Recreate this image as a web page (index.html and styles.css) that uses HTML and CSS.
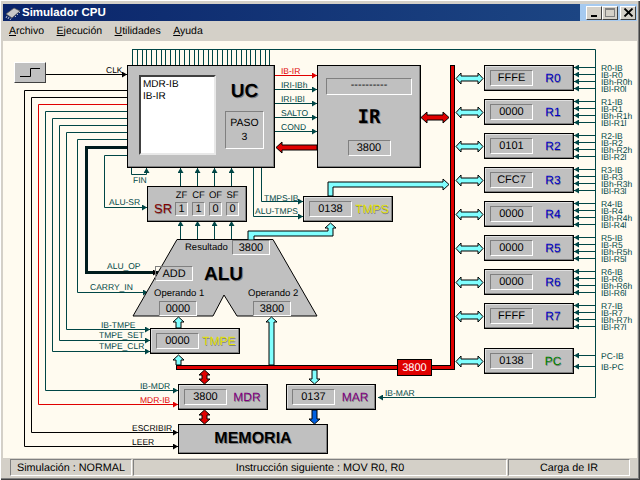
FILE: index.html
```html
<!DOCTYPE html>
<html lang="es">
<head>
    <meta charset="UTF-8">
    <title>Simulador CPU</title>
    <link rel="stylesheet" href="styles.css">
</head>
<body>
<div class="window">
    <div class="titlebar">
        <svg class="chip" width="16" height="14" viewBox="0 0 16 14">
            <path d="M1 8 L9 2 L15 5 L7 12 Z" fill="#c8c8c8" stroke="#505050" stroke-width="0.7"/>
            <path d="M2 10 L1 12 M4 11 L3 13 M6 12.500 L5 14 M10 10 L11 11 M12 8 L13 9 M14 6 L15 7" stroke="#e8e8e8" stroke-width="0.8"/>
        </svg>
        <span class="caption">Simulador CPU</span>
        <div class="winbtns">
            <button class="winbtn"><span class="ico-min"></span></button>
            <button class="winbtn winbtn-max"><span class="ico-max"></span></button>
            <button class="winbtn winbtn-close">
                <svg width="11" height="9" viewBox="0 0 11 9"><path d="M1.500 0.500 L9.500 8.500 M9.500 0.500 L1.500 8.500" stroke="#000" stroke-width="1.800"/></svg>
            </button>
        </div>
    </div>

    <div class="menubar">
        <span><u>A</u>rchivo</span>
        <span><u>E</u>jecución</span>
        <span><u>U</u>tilidades</span>
        <span><u>A</u>yuda</span>
    </div>

    <div class="diagram">
        <!-- wires use screen coordinates, hence the viewBox offset -->
        <svg class="wires" width="634" height="417" viewBox="3 41 634 417">
            <defs>
                <marker id="hTeal" markerUnits="userSpaceOnUse" markerWidth="5" markerHeight="6" refX="5" refY="3" orient="auto"><path d="M0 0L5 3L0 6z" fill="#004646"/></marker>
                <marker id="hBlack" markerUnits="userSpaceOnUse" markerWidth="5" markerHeight="6" refX="5" refY="3" orient="auto"><path d="M0 0L5 3L0 6z" fill="#000"/></marker>
                <marker id="hRed" markerUnits="userSpaceOnUse" markerWidth="5" markerHeight="6" refX="5" refY="3" orient="auto"><path d="M0 0L5 3L0 6z" fill="#e00000"/></marker>
                <polygon id="dbl" points="456,0 461,-5.500 461,-2.500 478,-2.500 478,-5.500 483,0 478,5.500 478,2.500 461,2.500 461,5.500"/>
                <polygon id="dblV" points="0,0 5.500,5 2.500,5 2.500,9 5.500,9 0,14 -5.500,9 -2.500,9 -2.500,5 -5.500,5"/>
            </defs>

            <!-- comb above the control unit -->
            <path class="wire" d="M132.500 49V65M137.500 49V65M142.500 49V65M146.500 49V65M151.500 49V65M156.500 49V65M161.500 49V65M165.500 49V65M170.500 49V65M175.500 49V65M179.500 49V65M184.500 49V65M189.500 49V65M194.500 49V65M198.500 49V65M203.500 49V65M208.500 49V65M212.500 49V65M217.500 49V65M222.500 49V65M227.500 49V65M231.500 49V65M236.500 49V65M241.500 49V65M246.500 49V65M250.500 49V65M255.500 49V65M260.500 49V65M265.500 49V65M269.500 49V65"/>

            <g class="wire" marker-end="url(#hTeal)">
                <path d="M132 49.500H595.500V397.500H378"/>
                <path d="M275 89.500H317"/>
                <path d="M275 103.500H317"/>
                <path d="M275 117.500H317"/>
                <path d="M275 131.500H317"/>
                <path d="M127 111.500H45.500V390.500H178"/>
                <path d="M127 118.500H52.500V351.500H150"/>
                <path d="M127 125.500H59.500V340.500H150"/>
                <path d="M127 132.500H66.500V329.500H150"/>
                <path d="M127 139.500H77.500V292.500H148"/>
                <path d="M127 155.500H104.500V207.500H147"/>
                <path d="M131.500 168V174.500H146.500V168"/>
                <path d="M261.500 168V201.500H303"/>
                <path d="M253.500 168V216.500H303"/>
                <path d="M180.500 186V168"/>
                <path d="M197.500 186V168"/>
                <path d="M214.500 186V168"/>
                <path d="M231.500 186V168"/>
                <path d="M180.500 240V221"/>
                <path d="M197.500 240V221"/>
                <path d="M214.500 240V221"/>
                <path d="M231.500 240V221"/>

                <path d="M595 67.500H574"/><path d="M595 74.500H574"/><path d="M595 81.500H574"/><path d="M595 88.500H574"/>
                <path d="M595 101.500H574"/><path d="M595 108.500H574"/><path d="M595 115.500H574"/><path d="M595 122.500H574"/>
                <path d="M595 135.500H574"/><path d="M595 142.500H574"/><path d="M595 149.500H574"/><path d="M595 156.500H574"/>
                <path d="M595 169.500H574"/><path d="M595 176.500H574"/><path d="M595 183.500H574"/><path d="M595 190.500H574"/>
                <path d="M595 203.500H574"/><path d="M595 210.500H574"/><path d="M595 217.500H574"/><path d="M595 224.500H574"/>
                <path d="M595 237.500H574"/><path d="M595 244.500H574"/><path d="M595 251.500H574"/><path d="M595 258.500H574"/>
                <path d="M595 271.500H574"/><path d="M595 278.500H574"/><path d="M595 285.500H574"/><path d="M595 292.500H574"/>
                <path d="M595 305.500H574"/><path d="M595 312.500H574"/><path d="M595 319.500H574"/><path d="M595 326.500H574"/>
                <path d="M595 355.500H574"/><path d="M595 366.500H574"/>
            </g>
            <g class="wire-black" marker-end="url(#hBlack)">
                <path d="M46 74.500H127"/>
                <path d="M127 90.500H24.500V446.500H178"/>
                <path d="M127 97.500H31.500V432.500H178"/>
                <path class="wire-thick" d="M127 147.500H86.500V272.500H158"/>
            </g>
            <g class="wire-red" marker-end="url(#hRed)">
                <path d="M275 75.500H317"/>
                <path d="M127 104.500H38.500V404.500H178"/>
            </g>

            <!-- internal bus -->
            <path class="bus-edge" d="M452.500 65V367.500H176"/>
            <path class="bus-core" d="M452.500 66V367.500H177"/>

            <!-- ALU body -->
            <polygon class="alu-shape" points="177,239.500 273,239.500 317,316 237,316 224,295 213,316 133,316"/>

            <!-- fat arrows -->
            <g class="fat-cyan">
                <use href="#dbl" y="78.500"/>
                <use href="#dbl" y="112.500"/>
                <use href="#dbl" y="146.500"/>
                <use href="#dbl" y="180.500"/>
                <use href="#dbl" y="214.500"/>
                <use href="#dbl" y="248.500"/>
                <use href="#dbl" y="282.500"/>
                <use href="#dbl" y="316.500"/>
                <use href="#dbl" y="361.500"/>
                <polygon points="328,196 328,182 443,182 443,179 449,184.500 443,190 443,187 333,187 333,196"/>
                <polygon points="330.500,223 336,228 333,228 333,236 254,236 254,240 248,240 248,231 328,231 328,228 325,228"/>
                <polygon points="178.500,317 184,322 181,322 181,328 176,328 176,322 173,322"/>
                <polygon points="178.500,355 184,360 181,360 181,365 176,365 176,360 173,360"/>
                <polygon points="271.500,317 277,322 274,322 274,365 269,365 269,322 266,322"/>
                <polygon points="314.500,384 320,379 317,379 317,370 312,370 312,379 309,379"/>
            </g>
            <g class="fat-red">
                <polygon points="421,117.500 427,112 427,115 443,115 443,112 449,117.500 443,123 443,120 427,120 427,123"/>
                <polygon points="276,147.500 282,142 282,145 317,145 317,150 282,150 282,153"/>
                <use href="#dblV" x="204.500" y="370"/>
                <use href="#dblV" x="204.500" y="410"/>
            </g>
            <polygon class="fat-blue" points="314.500,424 320,419 317,419 317,410 312,410 312,419 309,419"/>

            <!-- signal names -->
            <g class="sig">
                <text class="sig-black" x="106" y="73">CLK</text>
                <text class="sig-red" x="281" y="74">IB-IR</text>
                <text x="281" y="88">IRI-IBh</text>
                <text x="281" y="102">IRI-IBl</text>
                <text x="281" y="116">SALTO</text>
                <text x="281" y="130">COND</text>
                <text x="133" y="183">FIN</text>
                <text x="264" y="201">TMPS-IB</text>
                <text x="255" y="214">ALU-TMPS</text>
                <text x="109" y="205">ALU-SR</text>
                <text x="107" y="269">ALU_OP</text>
                <text x="90" y="290">CARRY_IN</text>
                <text x="101" y="328">IB-TMPE</text>
                <text x="99" y="338">TMPE_SET</text>
                <text x="99" y="349">TMPE_CLR</text>
                <text x="140" y="389">IB-MDR</text>
                <text class="sig-red" x="140" y="403">MDR-IB</text>
                <text class="sig-black" x="132" y="431">ESCRIBIR</text>
                <text class="sig-black" x="132" y="445">LEER</text>
                <text x="385" y="396">IB-MAR</text>

                <text x="601" y="70.500">R0-IB</text><text x="601" y="77.500">IB-R0</text><text x="601" y="84.500">IBh-R0h</text><text x="601" y="91.500">IBl-R0l</text>
                <text x="601" y="104.500">R1-IB</text><text x="601" y="111.500">IB-R1</text><text x="601" y="118.500">IBh-R1h</text><text x="601" y="125.500">IBl-R1l</text>
                <text x="601" y="138.500">R2-IB</text><text x="601" y="145.500">IB-R2</text><text x="601" y="152.500">IBh-R2h</text><text x="601" y="159.500">IBl-R2l</text>
                <text x="601" y="172.500">R3-IB</text><text x="601" y="179.500">IB-R3</text><text x="601" y="186.500">IBh-R3h</text><text x="601" y="193.500">IBl-R3l</text>
                <text x="601" y="206.500">R4-IB</text><text x="601" y="213.500">IB-R4</text><text x="601" y="220.500">IBh-R4h</text><text x="601" y="227.500">IBl-R4l</text>
                <text x="601" y="240.500">R5-IB</text><text x="601" y="247.500">IB-R5</text><text x="601" y="254.500">IBh-R5h</text><text x="601" y="261.500">IBl-R5l</text>
                <text x="601" y="274.500">R6-IB</text><text x="601" y="281.500">IB-R6</text><text x="601" y="288.500">IBh-R6h</text><text x="601" y="295.500">IBl-R6l</text>
                <text x="601" y="308.500">R7-IB</text><text x="601" y="315.500">IB-R7</text><text x="601" y="322.500">IBh-R7h</text><text x="601" y="329.500">IBl-R7l</text>
                <text x="601" y="358.500">PC-IB</text><text x="601" y="369.500">IB-PC</text>
            </g>
        </svg>

        <button class="clock">
            <svg width="24" height="15" viewBox="0 0 24 15"><path d="M2 11.500H12.500V3.500H22" fill="none" stroke="#000"/></svg>
        </button>

        <div class="uc">
            <div class="uc-list">MDR-IB<br>IB-IR</div>
            <div class="uc-side">
                <div class="big uc-name">UC</div>
                <div class="paso">PASO<br>3</div>
            </div>
        </div>

        <div class="ir">
            <div class="field ir-code">----------</div>
            <div class="big ir-name">IR</div>
            <div class="field">3800</div>
        </div>

        <div class="sr">
            <span class="name name-sr">SR</span>
            <div class="flags">
                <span>ZF</span><span>CF</span><span>OF</span><span>SF</span>
                <div class="field flag">1</div><div class="field flag">1</div><div class="field flag">0</div><div class="field flag">0</div>
            </div>
        </div>

        <div class="alu">
            <span class="alu-text alu-res">Resultado</span>
            <div class="field alu-f alu-f-res">3800</div>
            <div class="field alu-f alu-f-op">ADD</div>
            <div class="big alu-name">ALU</div>
            <span class="alu-text alu-op1">Operando 1</span>
            <div class="field alu-f alu-f-1">0000</div>
            <span class="alu-text alu-op2">Operando 2</span>
            <div class="field alu-f alu-f-2">3800</div>
        </div>

        <div class="reg reg-tmps"><div class="field">0138</div><span class="name name-tmp">TMPS</span></div>
        <div class="reg reg-tmpe"><div class="field">0000</div><span class="name name-tmp">TMPE</span></div>
        <div class="reg reg-mdr"><div class="field">3800</div><span class="name name-mem">MDR</span></div>
        <div class="reg reg-mar"><div class="field">0137</div><span class="name name-mem">MAR</span></div>

        <div class="big memoria">MEMORIA</div>
        <div class="bus-value">3800</div>

        <div class="reg-col">
            <div class="reg"><div class="field">FFFE</div><span class="name name-gp">R0</span></div>
            <div class="reg"><div class="field">0000</div><span class="name name-gp">R1</span></div>
            <div class="reg"><div class="field">0101</div><span class="name name-gp">R2</span></div>
            <div class="reg"><div class="field">CFC7</div><span class="name name-gp">R3</span></div>
            <div class="reg"><div class="field">0000</div><span class="name name-gp">R4</span></div>
            <div class="reg"><div class="field">0000</div><span class="name name-gp">R5</span></div>
            <div class="reg"><div class="field">0000</div><span class="name name-gp">R6</span></div>
            <div class="reg"><div class="field">FFFF</div><span class="name name-gp">R7</span></div>
        </div>
        <div class="reg reg-pc"><div class="field">0138</div><span class="name name-pc">PC</span></div>
    </div>

    <div class="statusbar">
        <div class="panel">Simulación : NORMAL</div>
        <div class="panel">Instrucción siguiente : MOV R0, R0</div>
        <div class="panel">Carga de IR</div>
    </div>
</div>
</body>
</html>
```

FILE: styles.css
```css
* {
    box-sizing: border-box;
}
body {
    margin: 0;
    background: #d4d0c8;
    font-family: "Liberation Sans", Arial, sans-serif;
    text-rendering: geometricPrecision;
}
.window {
    width: 640px;
    height: 480px;
    display: flex;
    flex-direction: column;
    padding: 4px 3px 3px;
    background: #d4d0c8;
    box-shadow: inset 1px 1px #fff, inset -1px -1px #404040, inset -2px -2px #808080;
    overflow: hidden;
}

/* title bar */
.titlebar {
    height: 17px;
    flex: none;
    display: flex;
    align-items: center;
    padding-left: 2px;
    background: linear-gradient(to right, #0a246a 0, #1c4583 577px, #a6caf0 577px);
}
.chip {
    flex: none;
}
.caption {
    margin-left: 1px;
    color: #fff;
    font-size: 11.500px;
    font-weight: bold;
}
.winbtns {
    margin-left: auto;
    margin-right: 1px;
    display: flex;
}
.winbtn {
    width: 16px;
    height: 14px;
    padding: 0;
    background: #d4d0c8;
    border: 1px solid;
    border-color: #fff #404040 #404040 #fff;
    display: flex;
    align-items: center;
    justify-content: center;
    position: relative;
}
.winbtn-close {
    margin-left: 2px;
}
.ico-min {
    width: 6px;
    height: 2px;
    background: #000;
    margin-top: 7px;
    margin-right: 1px;
}
.ico-max {
    width: 10px;
    height: 9px;
    border: 1px solid #808080;
    border-top-width: 2px;
}

/* menu */
.menubar {
    height: 20px;
    flex: none;
    display: flex;
    align-items: center;
    gap: 12.500px;
    padding-left: 6px;
    font-size: 10.500px;
    color: #000;
}

/* canvas */
.diagram {
    position: relative;
    flex: 1;
    background: #fffbf0;
}
.wires {
    position: absolute;
    left: 0;
    top: 0;
}
.wire, .wire path {
    fill: none;
    stroke: #004646;
}
.wire-black path {
    fill: none;
    stroke: #000;
}
.wire-black .wire-thick {
    stroke: #001c1c;
    stroke-width: 3;
}
.wire-red path {
    fill: none;
    stroke: #e00000;
}
.bus-edge {
    fill: none;
    stroke: #000;
    stroke-width: 5;
}
.bus-core {
    fill: none;
    stroke: #e00000;
    stroke-width: 3;
}
.alu-shape {
    fill: #c0c0c0;
    stroke: #000;
}
.fat-cyan {
    fill: #80ffff;
    stroke: #000;
}
.fat-red {
    fill: #e00000;
    stroke: #000;
}
.fat-blue {
    fill: #0060e0;
    stroke: #000;
}
.sig {
    font-size: 8.500px;
    fill: #004646;
}
.sig .sig-black {
    fill: #000;
}
.sig .sig-red {
    fill: #e00000;
}

/* shared bits */
.big {
    font-weight: bold;
    color: #000;
    text-shadow: 1px 1px #808080;
}
.field {
    width: 43px;
    height: 16px;
    flex: none;
    display: flex;
    align-items: center;
    justify-content: center;
    font-size: 11px;
    color: #000;
    border: 1px solid;
    border-color: #808080 #fff #fff #808080;
}
.reg {
    width: 90px;
    height: 26px;
    display: flex;
    align-items: center;
    padding-left: 5px;
    background: #c0c0c0;
    border: 1px solid #000;
    box-shadow: inset -1px -1px #808080, inset 1px 1px #e0e0e0;
}
.name {
    flex: 1;
    text-align: center;
    font-size: 12px;
    text-shadow: 0.500px 0.500px #808080;
}
.name-gp { color: #0000c8; }
.name-pc { color: #008000; }
.name-mem { color: #800080; }
.name-tmp { color: #e0e000; }
.name-sr {
    flex: none;
    color: #800000;
    font-size: 13px;
}

.reg-col {
    position: absolute;
    left: 481px;
    top: 24px;
    display: flex;
    flex-direction: column;
    gap: 8px;
}
.reg-pc { position: absolute; left: 481px; top: 307px; }
.reg-tmps { position: absolute; left: 300px; top: 155px; }
.reg-tmpe { position: absolute; left: 147px; top: 287px; }
.reg-mdr { position: absolute; left: 175px; top: 343px; }
.reg-mar { position: absolute; left: 283px; top: 343px; }

.clock {
    position: absolute;
    left: 11px;
    top: 21px;
    width: 32px;
    height: 21px;
    padding: 0;
    display: flex;
    align-items: center;
    justify-content: center;
    background: #c0c0c0;
    border: 1px solid;
    border-color: #fff #404040 #404040 #fff;
}

/* control unit */
.uc {
    position: absolute;
    left: 124px;
    top: 24px;
    width: 148px;
    height: 103px;
    display: flex;
    padding: 9px 0 0 11px;
    background: #c0c0c0;
    border: 1px solid #000;
    box-shadow: inset -1px -1px #808080;
}
.uc-list {
    width: 77px;
    height: 80px;
    padding: 2px 2px;
    background: #fff;
    border: 2px solid;
    border-color: #404040 #e8e8e8 #e8e8e8 #404040;
    font-size: 10px;
    line-height: 12px;
    color: #000;
}
.uc-side {
    margin-left: 9px;
    width: 39px;
    display: flex;
    flex-direction: column;
    align-items: center;
}
.uc-name {
    height: 36px;
    font-size: 19px;
    line-height: 34px;
}
.paso {
    width: 39px;
    height: 38px;
    padding-top: 4px;
    text-align: center;
    font-size: 10.500px;
    line-height: 14px;
    color: #000;
    border: 1px solid;
    border-color: #808080 #fff #fff #808080;
}

/* instruction register */
.ir {
    position: absolute;
    left: 314px;
    top: 24px;
    width: 104px;
    height: 103px;
    display: flex;
    flex-direction: column;
    align-items: center;
    padding-top: 12px;
    background: #c0c0c0;
    border: 1px solid #000;
    box-shadow: inset -1px -1px #808080;
}
.ir-code {
    width: 86px;
    height: 17px;
    padding-bottom: 3px;
}
.ir-name {
    height: 45px;
    font-family: "DejaVu Sans Mono", monospace;
    font-size: 19px;
    line-height: 45px;
}

/* status register */
.sr {
    position: absolute;
    left: 144px;
    top: 145px;
    width: 100px;
    height: 36px;
    display: flex;
    align-items: flex-end;
    padding: 0 7px 5px 6px;
    background: #c0c0c0;
    border: 1px solid #000;
    box-shadow: inset -1px -1px #808080;
}
.flags {
    margin-left: auto;
    display: grid;
    grid-template-columns: repeat(4, 13px);
    column-gap: 4px;
    justify-items: center;
    font-size: 9.500px;
    line-height: 13px;
    color: #000;
}
.flag {
    width: 13px;
    height: 14px;
}

/* ALU labels sit on top of the drawn shape */
.alu {
    position: absolute;
    left: 130px;
    top: 198px;
    width: 187px;
    height: 78px;
}
.alu-text {
    position: absolute;
    font-size: 9.500px;
    color: #000;
}
.alu-res { left: 52px; top: 3px; }
.alu-op1 { left: 21px; top: 49px; }
.alu-op2 { left: 115px; top: 49px; }
.alu-name {
    position: absolute;
    left: 71px;
    top: 25px;
    font-size: 19px;
}
.alu-f {
    position: absolute;
    width: 38px;
    height: 15px;
}
.alu-f-res { left: 99px; top: 1px; }
.alu-f-op { left: 22px; top: 27px; }
.alu-f-1 { left: 26px; top: 62px; }
.alu-f-2 { left: 120px; top: 62px; }

.memoria {
    position: absolute;
    left: 175px;
    top: 383px;
    width: 150px;
    height: 30px;
    display: flex;
    align-items: center;
    justify-content: center;
    font-size: 16px;
    background: #c0c0c0;
    border: 1px solid #000;
    box-shadow: inset -1px -1px #808080;
}
.bus-value {
    position: absolute;
    left: 394px;
    top: 318px;
    width: 35px;
    height: 17px;
    display: flex;
    align-items: center;
    justify-content: center;
    font-size: 11px;
    color: #fff;
    background: #e00000;
    border: 1px solid #000;
}

/* status bar */
.statusbar {
    height: 19px;
    flex: none;
    display: grid;
    grid-template-columns: 122px 374px 122px;
    gap: 1px;
    padding: 1px 0 1px 7px;
}
.panel {
    display: flex;
    align-items: center;
    justify-content: center;
    white-space: nowrap;
    font-size: 10.800px;
    color: #000;
    border: 1px solid;
    border-color: #808080 #fff #fff #808080;
}
```
